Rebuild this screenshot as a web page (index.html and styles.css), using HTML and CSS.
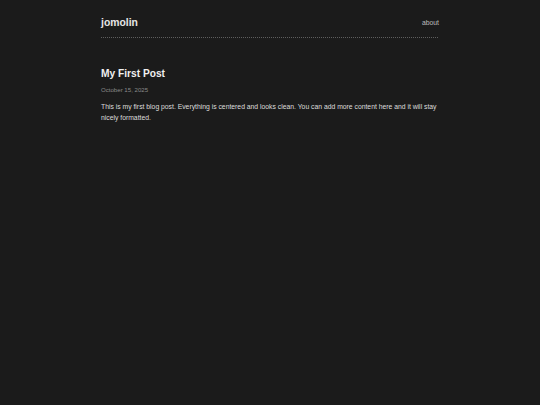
FILE: index.html
```html
<!DOCTYPE html>
<html>
<head>
<meta charset="utf-8">
<link rel="stylesheet" href="styles.css">
</head>
<body>
<div class="container">
  <header class="site-header">
    <a class="site-title" href="#">jomolin</a>
    <nav class="nav"><a href="#">about</a></nav>
  </header>
  <main class="content">
    <article class="post">
      <h1 class="post-title">My First Post</h1>
      <div class="post-date">October 15, 2025</div>
      <p class="post-body">This is my first blog post. Everything is centered and looks clean. You can add more content here and it will stay nicely formatted.</p>
    </article>
  </main>
</div>
</body>
</html>
```

FILE: styles.css
```css
html, body {
  margin: 0;
  padding: 0;
  background: #1b1b1b;
}
body {
  font-family: "Liberation Sans", Arial, sans-serif;
  color: #dddddd;
}
.container {
  width: 338px;
  margin: 0 auto;
}
.site-header {
  display: flex;
  justify-content: space-between;
  align-items: center;
  padding: 16px 0 8px;
  background-image: repeating-linear-gradient(to right, #5e5e5e 0 1px, transparent 1px 2px);
  background-size: 100% 1px;
  background-position: left bottom;
  background-repeat: no-repeat;
  line-height: 14px;
}
.site-title {
  font-size: 10.4px;
  font-weight: bold;
  color: #e6e6e6;
  text-decoration: none;
}
.nav {
  font-size: 6.8px;
  line-height: 8px;
}
.nav a {
  color: #bbbbbb;
  text-decoration: none;
}
.content {
  padding-top: 30px;
}
.post-title {
  margin: 0;
  font-size: 10.2px;
  font-weight: bold;
  color: #f0f0f0;
  line-height: 12px;
}
.post-date {
  margin-top: 6px;
  font-size: 6.1px;
  color: #8a8a8a;
}
.post-body {
  margin: 8px 0 0;
  font-size: 6.8px;
  line-height: 11px;
  color: #dddddd;
}
```
